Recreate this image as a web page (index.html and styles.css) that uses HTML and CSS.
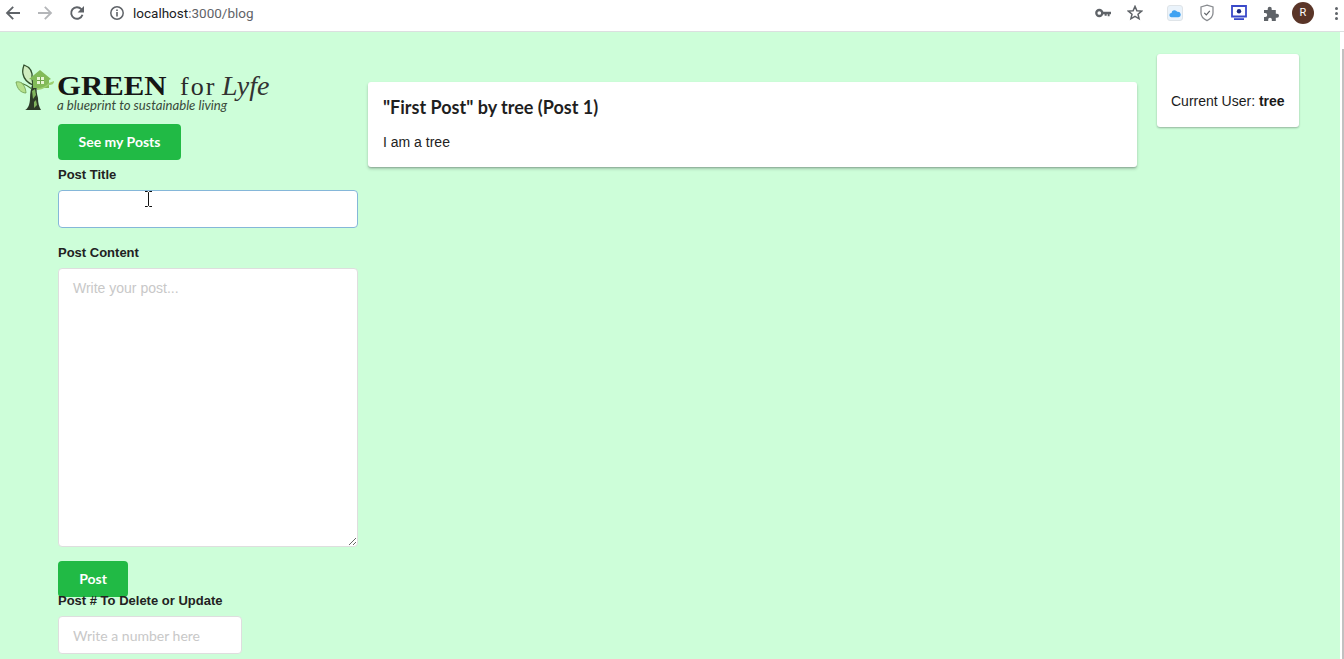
FILE: index.html
```html
<!doctype html>
<html lang="en">
<head>
<meta charset="utf-8">
<title>Green for Lyfe</title>
<link rel="stylesheet" href="styles.css">
</head>
<body>
<header class="chrome">
  <svg class="ico nav" viewBox="0 0 16 16"><path d="M15 8H2M8.200 1.800 2 8l6.200 6.200" fill="none" stroke="#5f6368" stroke-width="1.800"/></svg>
  <svg class="ico nav off" viewBox="0 0 16 16"><path d="M1 8h13M7.800 1.800 14 8l-6.200 6.200" fill="none" stroke="#b4b6b9" stroke-width="1.800"/></svg>
  <svg class="ico nav" viewBox="0 0 16 16"><path d="M13.500 9.800a5.800 5.800 0 1 1-1.200-5.700L14 6" fill="none" stroke="#5f6368" stroke-width="1.900"/><path d="M15 1v6.400H8.600z" fill="#5f6368"/></svg>
  <svg class="ico info" viewBox="0 0 16 16"><circle cx="8" cy="8" r="6.200" fill="none" stroke="#5f6368" stroke-width="1.500"/><path d="M7.200 7h1.600v4.400H7.200zM7.200 4.400h1.600V6H7.200z" fill="#5f6368"/></svg>
  <span class="url">localhost<span class="url-path">:3000/blog</span></span>
  <div class="tools">
    <svg class="ico key" viewBox="0 0 16 16"><circle cx="4.300" cy="8" r="3" fill="none" stroke="#5f6368" stroke-width="2.300"/><path d="M7 6.700h9v2.600h-1.400v1.900h-1.900V9.300h-1v1.400H9.600V9.300H7z" fill="#5f6368"/></svg>
    <svg class="ico star" viewBox="0 0 16 16"><path d="m8 1.400 1.900 4.300 4.700.4-3.600 3.100 1.100 4.600L8 11.400l-4.100 2.400L5 9.200 1.400 6.100l4.700-.4z" fill="none" stroke="#5f6368" stroke-width="1.500"/></svg>
    <span class="cloud-tile"><svg viewBox="0 0 14 10"><path d="M3.200 9.500a2.600 2.600 0 0 1-.3-5.200A3.600 3.600 0 0 1 9.600 3 2.900 2.900 0 0 1 11 9.500z" fill="#3ea2f2"/></svg></span>
    <svg class="ico shield" viewBox="0 0 16 18"><path d="M8 1.200 14 3v6c0 3.600-2.600 6-6 7.600C4.600 15 2 12.600 2 9V3z" fill="none" stroke="#8a8d91" stroke-width="1.300"/><path d="m5.300 8.800 2 2 3.500-4" fill="none" stroke="#5f6368" stroke-width="1.200"/></svg>
    <svg class="ico screen" viewBox="0 0 16 16"><path d="M1 1h14v10.500H1z" fill="#fff" stroke="#3949c9" stroke-width="1.800"/><circle cx="8" cy="6.200" r="2.200" fill="#1b2a80"/><path d="M3 13.200h10V15H3z" fill="#3949c9"/></svg>
    <svg class="ico puzzle" viewBox="0 0 16 16"><path d="M1 5h3.700V3.800a2 2 0 0 1 4 0V5h4.100v3.700H14a2 2 0 0 1 0 4h-1.200V16H8.800v-1.500a1.800 1.800 0 0 0-3.600 0V16H1v-3.900h1.200a2 2 0 0 0 0-4H1z" fill="#5f6368"/></svg>
    <span class="avatar">R</span>
    <span class="dots"><i></i><i></i><i></i></span>
  </div>
</header>

<div class="page">
  <aside class="side">
    <div class="logo">
      <svg class="tree" viewBox="0 0 40 48">
        <path d="M10 46c3-1 5-6 5-12 0-5 1-9 2-13l5 1c-1 5 0 8 1 12 0 5 1 9 3 12z" fill="#2c3a28"/>
        <path d="M17 27l3-2 1 6-3 4zM19 38l2-2 1 5-3 3z" fill="#7fb35c"/>
        <path d="M17 25C13 22 9 20 6 19" fill="none" stroke="#4c7a36" stroke-width="1.200"/>
        <path d="M1 18c4-1 7 1 9 6 1 3 1 5 1 5C6 29 2 25 1 18z" fill="#b4e08c" stroke="#6c9c4c" stroke-width=".8"/>
        <path d="M9 1c6 2 9 7 8 14l1 6C13 19 9 15 8 10 7 7 8 4 9 1z" fill="#cfeec0" stroke="#32502c" stroke-width="1.300"/>
        <path d="M14 15 25 6l11 9-2 1v8H18v-8z" fill="#82bb58"/>
        <path d="M22 13h7v7h-7z" fill="#e8f6d4"/>
        <path d="M25.500 13v7M22 16.500h7" stroke="#6ea24a" stroke-width="1"/>
        <path d="M22 24c5 0 9-2 12-5l5-2c0 3-2 4-5 4-3 2-7 5-12 5z" fill="#9cd070"/>
      </svg>
      <div class="logo-text">
        <div class="logo-name"><b>GREEN</b><span class="for">for</span><em>Lyfe</em></div>
        <div class="logo-tag">a blueprint to sustainable living</div>
      </div>
    </div>
    <form class="blog-form">
      <button type="button" class="btn btn-mine">See my Posts</button>
      <label class="lbl">Post Title</label>
      <input class="field focus" type="text">
      <label class="lbl lbl-content">Post Content</label>
      <textarea class="field area" placeholder="Write your post..."></textarea>
      <button type="button" class="btn btn-post">Post</button>
      <label class="lbl lbl-num">Post # To Delete or Update</label>
      <input class="field num" type="text" placeholder="Write a number here">
    </form>
  </aside>

  <main class="posts">
    <article class="card post">
      <h3>"First Post" by tree (Post 1)</h3>
      <p>I am a tree</p>
    </article>
  </main>

  <div class="card user">Current User: <strong>tree</strong></div>
</div>

<svg class="cursor" viewBox="0 0 9 16"><path d="M1 .5h2.500l1 1 1-1H8M4.500 1.500v13M1 15.500h2.500l1-1 1 1H8" fill="none" stroke="#111" stroke-width="1"/></svg>
<div class="scrollbar"><div class="thumb"></div></div>
</body>
</html>
```

FILE: styles.css
```css
*{box-sizing:border-box}
html,body{height:100%}
body{margin:0;overflow:hidden;background:#cdfed9;color:#1a1a1a;font-family:"Liberation Sans",Arial,sans-serif;font-size:14px}

/* browser toolbar */
.chrome{height:32px;background:#fff;border-bottom:1px solid #dcdfe0;display:flex;align-items:center;padding:0 0 5px 5px}
.ico{display:block;flex:none}
.nav{width:16px;height:16px;margin-right:16px}
.info{width:16px;height:16px;margin-left:8px}
.url{margin-left:8px;font-family:"Roboto",sans-serif;font-size:13.500px;color:#202124}
.url-path{color:#5f6368}
.tools{margin-left:auto;display:flex;align-items:center}
.key{width:16px;height:16px;margin-right:16px}
.star{width:16px;height:16px;margin-right:24px}
.cloud-tile{width:16px;height:16px;border-radius:3px;background:#eaf3fb;border:1px solid #dfe4e8;display:flex;align-items:center;justify-content:center;margin-right:16px}
.cloud-tile svg{width:12px;height:9px}
.shield{width:16px;height:18px;margin-right:16px}
.screen{width:16px;height:16px;margin-right:16px}
.puzzle{width:16px;height:16px;margin-right:13px}
.avatar{width:22px;height:22px;border-radius:50%;background:#5a3528;color:#fff;font:11px/22px "Roboto",sans-serif;text-align:center;margin-right:21px}
.dots{display:flex;flex-direction:column;gap:2px;width:3px;margin-right:6px}
.dots i{display:block;width:3px;height:3px;border-radius:50%;background:#5f6368}

/* page columns */
.page{display:flex;align-items:flex-start;height:627px;overflow:hidden}
.side{width:368px;flex:none}
.posts{width:769px;flex:none;padding-top:50px}
.user{width:142px;height:73px;margin:22px 0 0 20px;padding-top:39px;padding-left:14px;white-space:nowrap;line-height:16px}

/* logo */
.logo{display:flex;height:60px;margin:32px 0 0 15px;align-items:flex-start}
.tree{width:40px;height:48px;flex:none}
.logo-text{margin:10px 0 0 2px;color:#151515}
.logo-name{display:flex;align-items:baseline;font-family:"Liberation Serif",serif;line-height:24px;white-space:nowrap}
.logo-name b{font-size:27px;transform:scaleX(1.14);transform-origin:left;display:inline-block;width:123px}
.for{font-size:26px;color:#2b2b2b;letter-spacing:2px;width:42px}
.logo-name em{font-size:28px;color:#333}
.logo-tag{font-family:"Lato",sans-serif;font-style:italic;font-size:13.200px;line-height:13px;color:#3a4a3a;white-space:nowrap}

/* form */
.blog-form{padding-left:58px;width:358px}
.btn{display:block;height:36px;border:0;border-radius:4px;background:#21ba45;color:#fff;text-align:center;padding:0;font:700 14px/36px "Lato",sans-serif}
.btn-mine{width:123px}
.lbl{display:block;font-size:13px;font-weight:700;line-height:16px;color:#222;margin-top:7px}
.field{display:block;width:100%;border:1px solid #dedede;border-radius:4px;background:#fff;outline:0;font-family:"Lato",sans-serif;font-size:14px;padding:10px 14px}
.field::placeholder{color:#c8c8c8}
.focus{height:38px;margin-top:7px;border-color:#85b7d9}
.lbl-content{margin-top:17px}
.area{height:279px;margin-top:7px;padding-top:9px;font-family:"Liberation Sans",Arial,sans-serif;resize:vertical;line-height:20px}
.btn-post{margin-top:14px;width:70px;margin-bottom:-5px}
.lbl-num{margin-top:1px;position:relative}
.num{width:184px;height:38px;margin-top:7px}

/* cards */
.card{background:#fff;border-radius:3px;box-shadow:0 1px 2px rgba(34,36,38,.15),0 1px 2px rgba(34,36,38,.2)}
.post{height:85px;padding:13px 15px;box-shadow:0 1px 1px rgba(34,36,38,.15),0 2px 3px rgba(34,36,38,.25)}
.post h3{margin:0;font:700 18px/24px "Lato",sans-serif;color:#1f1f1f}
.post p{margin:13px 0 0;font-size:14px;line-height:20px;color:#222}

.cursor{position:absolute;left:144px;top:191px;width:9px;height:16px}
.scrollbar{position:absolute;right:0;top:32px;bottom:0;width:4px;background:#fff;padding:17px 0 0 2px}
.thumb{height:100%;background:#c1c1c1}
```
